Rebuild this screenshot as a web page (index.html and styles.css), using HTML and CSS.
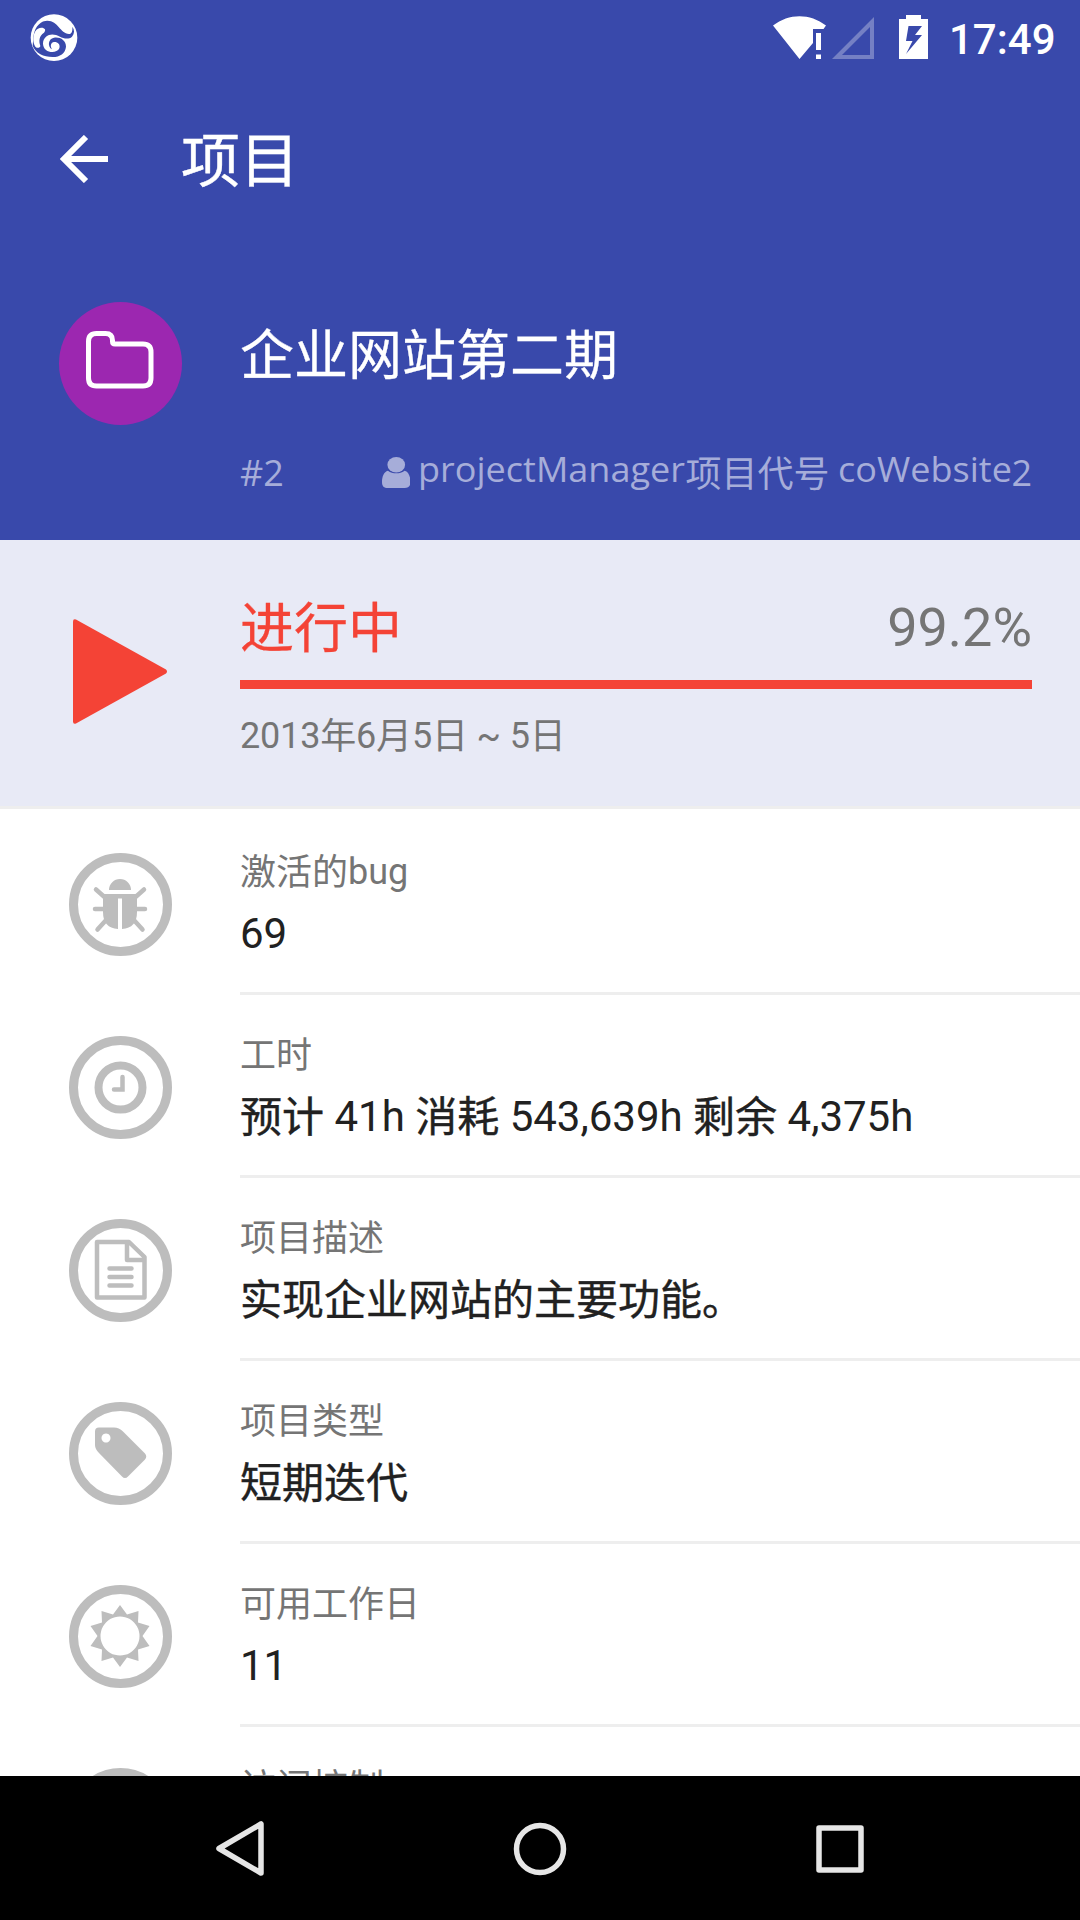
FILE: index.html
```
<!DOCTYPE html>
<html lang="zh-CN">
<head>
<meta charset="utf-8">
<title>项目</title>
<link rel="stylesheet" href="styles.css">
</head>
<body>
<div class="screen">
  <header class="header">
    <div class="statusbar">
      <svg class="logo" width="48" height="48" viewBox="90 42 144 144">
        <circle cx="162" cy="113" r="70" fill="#fff"/>
        <path fill="#3949ab" d="M100 110C105 75 125 62 142 62C175 62 180 100 207 102C216 102 218 92 217 80C224 90 224 100 216 110C205 120 190 115 180 110C165 102 150 100 138 110C126 120 126 140 138 150C150 160 172 158 178 145C182 132 172 125 162 126C152 128 150 138 156 148C142 140 144 116 162 113C180 110 198 120 198 140C196 160 180 171 158 171C130 171 108 160 98 138Z"/>
        <path fill="#fff" d="M135 88C130 80 112 82 106 94C98 108 98 128 106 140C112 146 120 144 121 138C116 122 117 108 132 98C135 95 136 92 135 88Z"/>
      </svg>
      <svg class="wifi" width="54" height="44" viewBox="0 0 54 44"><path fill="#fff" d="M0 9.500C16-3 37-3 53 9.500L50.500 13H40v14L26.500 43zM43 17h5v17h-5zM43 38.500h5V43h-5z"/></svg>
      <svg class="cell" width="42" height="44" viewBox="0 0 42 44"><path fill="#7580c4" fill-rule="evenodd" d="M42 1v42H0zM38 11L10 39h28z"/></svg>
      <svg class="battery" width="29" height="44" viewBox="0 0 29 44"><path fill="#fff" fill-rule="evenodd" d="M7 0h15v4h7v40H0V4h7zM9.500 11L7 26h6.500L7 39 23 20h-7l7-9z"/></svg>
      <span class="clock">17:49</span>
    </div>
    <div class="toolbar">
      <svg width="48" height="48" viewBox="0 0 48 48"><path fill="none" stroke="#fff" stroke-width="6" d="M48 24H4M26 2L4 24l22 22"/></svg>
      <h1 class="title">项目</h1>
    </div>
    <div class="project">
      <div class="avatar">
        <svg width="68" height="58" viewBox="0 0 68 58"><path fill="none" stroke="#fff" stroke-width="5" d="M10.500 2.500h9q7 0 7 7v1q0 2.500 2.500 2.500h28q8 0 8 8v26q0 8-8 8h-46.500q-8 0-8-8v-36.500q0-8 8-8z"/></svg>
      </div>
      <div class="project-main">
        <h2 class="project-name">企业网站第二期</h2>
        <div class="meta">
          <span class="num">#2</span>
          <span class="owner">
            <svg class="user" width="28.500" height="31" viewBox="0 0 29 36" preserveAspectRatio="none"><ellipse cx="14.500" cy="9" rx="9" ry="9"/><path d="M6 16c5 4 12 4 17 0 4 1 6 7 6 13 0 5-2 7-6 7H6c-4 0-6-2-6-7 0-6 2-12 6-13z"/></svg>
            <span class="owner-text"><span class="latin manager">projectManager</span><span class="cjk">项目代号</span><span class="latin code">coWebsite</span><span class="num">2</span></span>
          </span>
        </div>
      </div>
    </div>
  </header>

  <section class="status">
    <svg class="play" width="94" height="105" viewBox="0 0 95 105" preserveAspectRatio="none"><path d="M0 2.500Q0-.5 3 .5L94 50.500q2 2 0 4L3 104.500q-3 1-3-2z"/></svg>
    <div class="status-main">
      <div class="status-line"><span class="state">进行中</span><span class="percent">99.2%</span></div>
      <div class="bar"></div>
      <div class="dates">2013<span class="cjk">年</span>6<span class="cjk">月</span>5<span class="cjk">日</span> ~ 5<span class="cjk">日</span></div>
    </div>
  </section>

  <main class="list">
    <div class="row">
      <div class="ring"><svg width="58" height="58" viewBox="0 0 58 58"><path d="M18 15a11 11 0 0 1 22 0zM12 19h34v18q0 16-15 17V23.500h-4V54Q12 53 12 37z"/><path class="line" d="M5 14.500l9 8M53 14.500l-9 8M4 34h11M54 34H43M6.500 54.500l10-11M51.500 54.500l-10-11"/></svg></div>
      <div class="cell-text"><div class="label"><span class="cjk">激活的</span>bug</div><div class="value">69</div></div>
    </div>
    <div class="row">
      <div class="ring"><svg width="58" height="58" viewBox="0 0 58 58"><circle class="clock-ring" cx="29.500" cy="29.500" r="22"/><path class="line" d="M31.500 19v12.500H23"/></svg></div>
      <div class="cell-text"><div class="label"><span class="cjk">工时</span></div><div class="value"><span class="cjk">预计</span> 41h <span class="cjk">消耗</span> 543,639h <span class="cjk">剩余</span> 4,375h</div></div>
    </div>
    <div class="row">
      <div class="ring"><svg width="58" height="62" viewBox="0 0 58 62"><path class="doc" d="M6 3h32L53.500 18v40.500H6zM36 3v18h17.500"/><path class="line" d="M18.500 29.500h22M18.500 38h22M18.500 46.500h22"/></svg></div>
      <div class="cell-text"><div class="label"><span class="cjk">项目描述</span></div><div class="value"><span class="cjk">实现企业网站的主要功能。</span></div></div>
    </div>
    <div class="row">
      <div class="ring"><svg width="58" height="58" viewBox="0 0 58 58"><path fill-rule="evenodd" d="M8 3.500h15q5 0 9 4l22 22q2.500 3 0 6L37 52.500q-3 3-6 0L8 29q-4-4-4-8V7.500q0-4 4-4zM15 9.500a4.500 4.500 0 1 0 .01 0z"/></svg></div>
      <div class="cell-text"><div class="label"><span class="cjk">项目类型</span></div><div class="value"><span class="cjk">短期迭代</span></div></div>
    </div>
    <div class="row">
      <div class="ring"><svg width="60" height="62" viewBox="-30 -31 60 62"><path fill-rule="evenodd" d="M0-31L7-21.500 18.500-25 18-13.500 29.500-10 22.500 0 29.500 10 18 13.500 18.500 25 7 21.500 0 31-7 21.500-18.500 25-18 13.500-29.500 10-22.500 0-29.500-10-18-13.500-18.500-25-7-21.500zM0-19.500a19.500 19.500 0 1 0 .01 0z"/></svg></div>
      <div class="cell-text"><div class="label"><span class="cjk">可用工作日</span></div><div class="value">11</div></div>
    </div>
    <div class="row">
      <div class="ring"></div>
      <div class="cell-text"><div class="label"><span class="cjk">访问控制</span></div></div>
    </div>
  </main>

  <nav class="navbar">
    <svg width="60" height="60" viewBox="0 0 60 60"><path d="M51 5v49L9 29.500z"/></svg>
    <svg width="60" height="60" viewBox="0 0 60 60"><circle cx="30" cy="30" r="23.500"/></svg>
    <svg width="60" height="60" viewBox="0 0 60 60"><path d="M9 9h42v42H9z"/></svg>
  </nav>
</div>
</body>
</html>
```
FILE: styles.css
```
* { box-sizing: border-box; }
body { margin: 0; font-family: Roboto, "Noto Sans CJK SC", sans-serif; }
svg { display: block; flex: none; }
h1, h2 { margin: 0; font-weight: 400; }
.screen {
  width: 1080px;
  height: 1920px;
  overflow: hidden;
  display: flex;
  flex-direction: column;
  background: #fff;
}
.cjk { line-height: 1; vertical-align: -1px; }

.header { flex: none; height: 540px; background: #3949ab; color: #fff; }
.statusbar { height: 75px; display: flex; align-items: flex-start; padding: 14px 25px 0 30px; }
.wifi { margin: 2px 0 0 695px; }
.cell { margin: 2px 0 0 5px; }
.battery { margin: 1px 0 0 25px; }
.clock { margin-left: 21px; padding-top: 1px; font-size: 42px; font-weight: 500; line-height: 50px; white-space: nowrap; }
.toolbar { height: 168px; display: flex; align-items: center; padding: 0 60px; gap: 73px; }
.title { font-size: 59px; line-height: 80px; padding-top: 5px; -webkit-text-stroke: 0.4px; }
.project { display: flex; padding: 59px 48px 0 59px; gap: 58px; }
.avatar {
  flex: none;
  width: 123px;
  height: 123px;
  border-radius: 50%;
  background: #9c27b0;
  display: flex;
  align-items: center;
  justify-content: center;
  padding: 0 1px 7px 0;
}
.project-main { flex: 1; }
.project-name { font-size: 54px; line-height: 80px; padding-top: 15px; -webkit-text-stroke: 0.3px; }
.meta {
  display: flex;
  justify-content: space-between;
  margin-top: 50px;
  font-size: 36px;
  line-height: 54px;
  color: #a6add9;
  white-space: nowrap;
}
.num { font-family: "Open Sans", sans-serif; line-height: 1; padding-top: 8px; }
.owner { display: flex; }
.owner-text { display: block; height: 54px; }
.user { fill: #a6add9; margin: 10px 8px 0 0; }
.latin {
  display: inline-block;
  font-family: "Open Sans", sans-serif;
  font-size: 34px;
  line-height: 1;
  vertical-align: 4px;
  transform: scaleX(1.06);
  transform-origin: left;
}
.manager { width: 267px; }
.code { width: 173px; margin-left: 9px; }

.status {
  flex: none;
  height: 269px;
  display: flex;
  background: #e8eaf6;
  border-bottom: 3px solid #eee;
  padding: 0 48px 0 73px;
}
.play { fill: #f44336; margin-top: 79px; }
.status-main { flex: 1; margin-left: 73px; padding-top: 48px; }
.status-line { display: flex; justify-content: space-between; height: 80px; font-size: 54px; line-height: 80px; }
.state { color: #f44336; padding-top: 2px; -webkit-text-stroke: 0.3px; }
.percent { color: #757575; }
.bar { height: 9px; background: #f44336; margin-top: 12px; }
.dates { font-size: 36px; line-height: 54px; color: #757575; margin-top: 20px; letter-spacing: -0.18px; }

.list { flex: 1; min-height: 0; overflow: hidden; padding-top: 3px; }
.row { height: 183px; display: flex; padding-left: 69px; }
.ring {
  flex: none;
  width: 103px;
  height: 103px;
  margin: 40.5px 68px 0 0;
  border: 9px solid #bdbdbd;
  border-radius: 50%;
  display: flex;
  align-items: center;
  justify-content: center;
  padding: 0 1px 1px 0;
}
.ring svg { fill: #bdbdbd; }
.ring .line { fill: none; stroke: #bdbdbd; stroke-width: 4.5; stroke-linecap: round; }
.ring .clock-ring { fill: none; stroke: #bdbdbd; stroke-width: 8; }
.ring .doc { fill: none; stroke: #bdbdbd; stroke-width: 4.5; stroke-linejoin: round; }
.cell-text { flex: 1; border-bottom: 3px solid #eee; padding-top: 33px; }
.label { height: 54px; font-size: 36px; line-height: 54px; color: #757575; }
.value { font-size: 42px; line-height: 62px; color: #212121; margin-top: 4px; }
.value .cjk { -webkit-text-stroke: 0.4px; }

.navbar {
  flex: none;
  height: 144px;
  background: #000;
  display: flex;
  justify-content: center;
  align-items: center;
  gap: 240px;
  padding-top: 1px;
}
.navbar svg { fill: none; stroke: #e6e6e6; stroke-width: 5.5; stroke-linejoin: round; }
```
